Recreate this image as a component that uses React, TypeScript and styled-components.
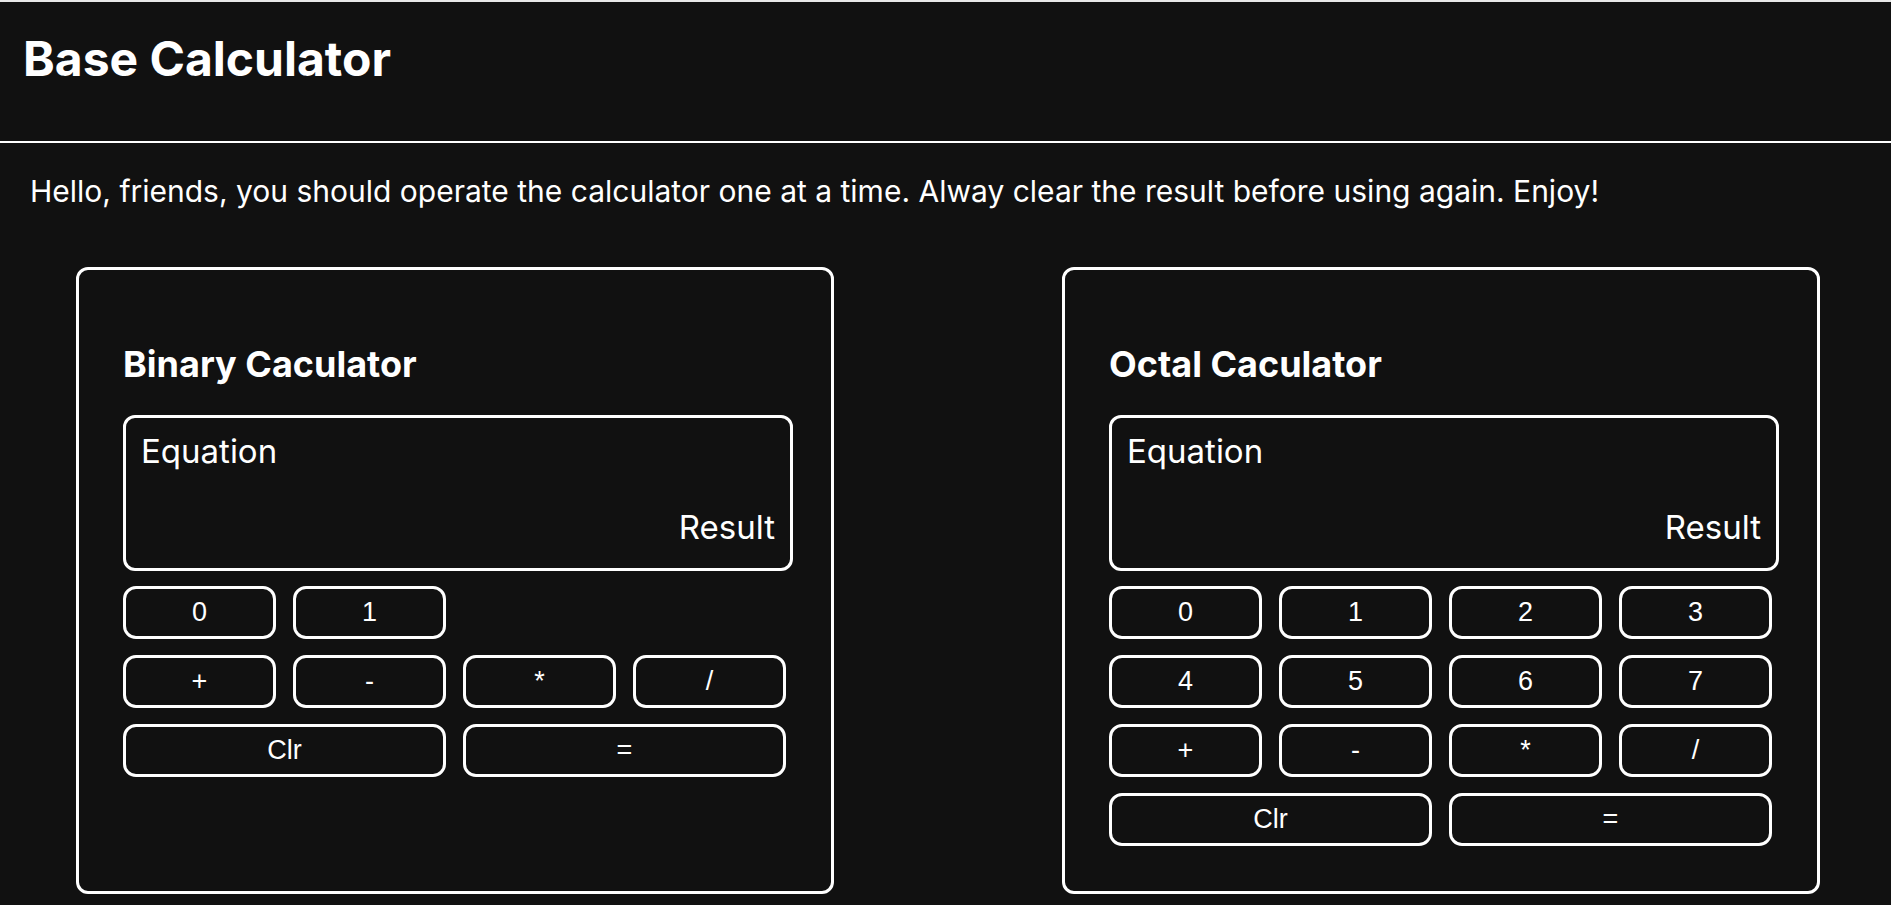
import styled, { createGlobalStyle } from 'styled-components';

const GlobalStyle = createGlobalStyle`
    body {
        margin: 0;
        background: #111111;
        color: #ffffff;
        font-family: Inter, "Noto Sans", sans-serif;
    }
`

type Key = { label: string; wide?: boolean }

const binaryKeys: Key[][] = [
    [{ label: '0' }, { label: '1' }],
    [{ label: '+' }, { label: '-' }, { label: '*' }, { label: '/' }],
    [{ label: 'Clr', wide: true }, { label: '=', wide: true }],
]

const octalKeys: Key[][] = [
    [{ label: '0' }, { label: '1' }, { label: '2' }, { label: '3' }],
    [{ label: '4' }, { label: '5' }, { label: '6' }, { label: '7' }],
    [{ label: '+' }, { label: '-' }, { label: '*' }, { label: '/' }],
    [{ label: 'Clr', wide: true }, { label: '=', wide: true }],
]

const Calculator = ({ title, keys }: { title: string; keys: Key[][] }) => {
    return (
        <StyledCard>
            <StyledCardTitle>{title}</StyledCardTitle>
            <StyledDisplay>
                <StyledEquation>Equation</StyledEquation>
                <StyledResult>Result</StyledResult>
            </StyledDisplay>
            <StyledKeypad>
                {keys.map((row, r) => (
                    <StyledKeyRow key={r}>
                        {row.map((k) => (
                            <StyledKey key={k.label} $wide={k.wide}>{k.label}</StyledKey>
                        ))}
                    </StyledKeyRow>
                ))}
            </StyledKeypad>
        </StyledCard>
    )
}

const App = () => {
    return (
        <>
            <GlobalStyle />
            <StyledHeader>
                <StyledTitle>Base Calculator</StyledTitle>
            </StyledHeader>
            <StyledNote>
                Hello, friends, you should operate the calculator one at a time. Alway clear the result before using again. Enjoy!
            </StyledNote>
            <StyledCards>
                <Calculator title="Binary Caculator" keys={binaryKeys} />
                <Calculator title="Octal Caculator" keys={octalKeys} />
            </StyledCards>
        </>
    )
}

export default App

const StyledHeader = styled.header`
    height: 139px;
    border-top: 2px solid #e8e8e8;
    border-bottom: 2px solid #ffffff;
`
const StyledTitle = styled.h1`
    margin: 0;
    padding: 27px 23px 0;
    font-size: 48px;
    font-weight: 700;
`
const StyledNote = styled.p`
    margin: 30px 0 0;
    padding-left: 30px;
    font-size: 30px;
`
const StyledCards = styled.div`
    display: flex;
    align-items: stretch;
    gap: 228px;
    margin-top: 58px;
    padding-left: 76px;
`
const StyledCard = styled.div`
    box-sizing: border-box;
    width: 758px;
    border: 3px solid #ffffff;
    border-radius: 12px;
    padding: 0 38px 45px 44px;
`
const StyledCardTitle = styled.h2`
    margin: 72px 0 29px;
    font-size: 36px;
    font-weight: 700;
`
const StyledDisplay = styled.div`
    box-sizing: border-box;
    height: 156px;
    border: 3px solid #ffffff;
    border-radius: 12px;
    padding: 13px 15px 21px;
    display: flex;
    flex-direction: column;
    justify-content: space-between;
    font-size: 33px;
`
const StyledEquation = styled.div``
const StyledResult = styled.div`
    text-align: right;
`
const StyledKeypad = styled.div`
    display: flex;
    flex-direction: column;
    gap: 16px;
    margin-top: 15px;
`
const StyledKeyRow = styled.div`
    display: grid;
    grid-template-columns: repeat(4, 153px);
    column-gap: 17px;
`
const StyledKey = styled.button<{ $wide?: boolean }>`
    grid-column: span ${(p) => (p.$wide ? 2 : 1)};
    height: 53px;
    background: transparent;
    color: #ffffff;
    border: 3px solid #ffffff;
    border-radius: 13px;
    font-family: "Liberation Sans", Arial, sans-serif;
    font-size: 27px;
    padding: 0;
    cursor: pointer;
`
